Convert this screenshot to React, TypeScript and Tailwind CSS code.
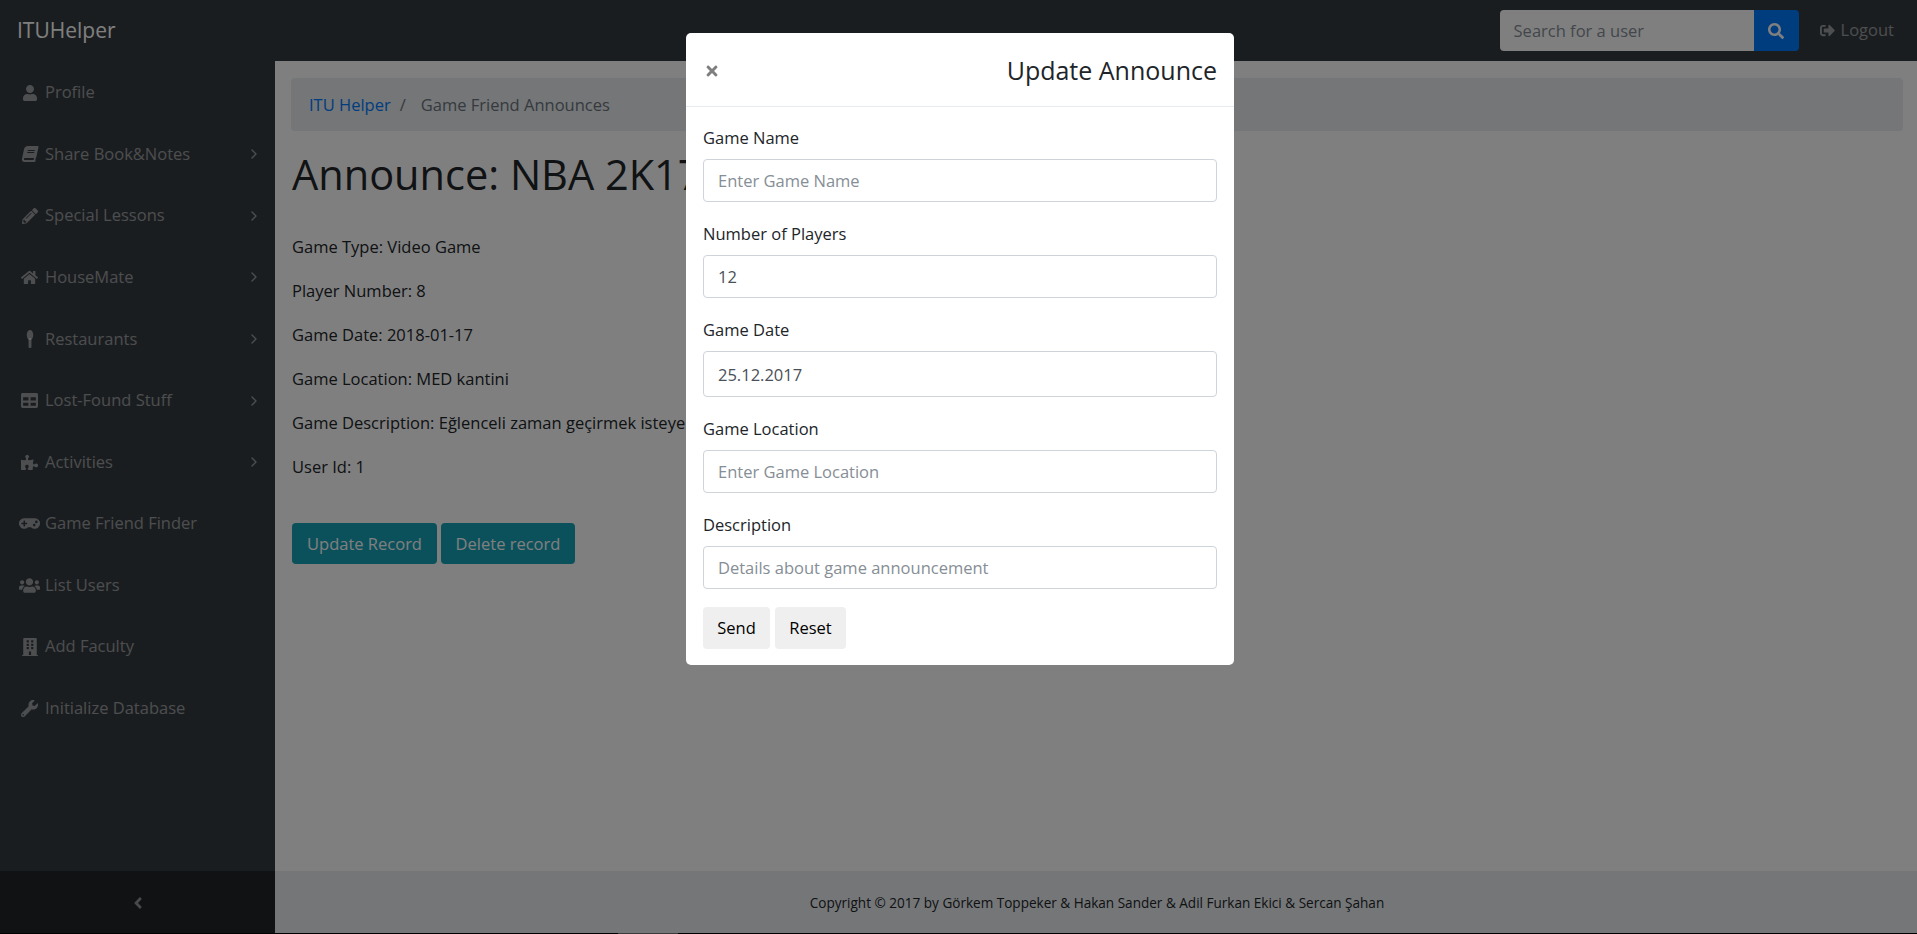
import type { ReactNode } from "react";
import {
  FaUser,
  FaBook,
  FaPencilAlt,
  FaHome,
  FaTable,
  FaPuzzlePiece,
  FaGamepad,
  FaUsers,
  FaBuilding,
  FaWrench,
  FaAngleLeft,
  FaSearch,
  FaSignOutAlt,
  FaTimes,
} from "react-icons/fa";
import { ChevronRight } from "lucide-react";

function SpoonIcon() {
  return (
    <svg viewBox="0 0 16 20" className="h-[18px] w-[16px]" fill="currentColor">
      <ellipse cx="8" cy="5.5" rx="3.6" ry="5.5" />
      <rect x="6.4" y="9" width="3.2" height="11" rx="1.2" />
    </svg>
  );
}

const navItems: { label: string; icon: ReactNode; arrow?: boolean }[] = [
  { label: "Profile", icon: <FaUser className="text-[16px]" /> },
  { label: "Share Book&Notes", icon: <FaBook className="text-[16px] -skew-x-12" />, arrow: true },
  { label: "Special Lessons", icon: <FaPencilAlt className="text-[16px]" />, arrow: true },
  { label: "HouseMate", icon: <FaHome className="text-[17px]" />, arrow: true },
  { label: "Restaurants", icon: <SpoonIcon />, arrow: true },
  { label: "Lost-Found Stuff", icon: <FaTable className="text-[17px]" />, arrow: true },
  { label: "Activities", icon: <FaPuzzlePiece className="text-[17px]" />, arrow: true },
  { label: "Game Friend Finder", icon: <FaGamepad className="text-[21px]" /> },
  { label: "List Users", icon: <FaUsers className="text-[21px]" /> },
  { label: "Add Faculty", icon: <FaBuilding className="text-[18px]" /> },
  { label: "Initialize Database", icon: <FaWrench className="text-[17px]" /> },
];

const details = [
  "Game Type: Video Game",
  "Player Number: 8",
  "Game Date: 2018-01-17",
  "Game Location: MED kantini",
  "Game Description: Eğlenceli zaman geçirmek isteyenler gelsin",
  "User Id: 1",
];

function Field({
  label,
  placeholder,
  value,
  tall,
}: {
  label: string;
  placeholder?: string;
  value?: string;
  tall?: boolean;
}) {
  return (
    <div className="mb-[18.6px]">
      <label className="mb-2 block text-[16.5px] leading-[26.4px] text-[#212529]">{label}</label>
      <input
        readOnly
        placeholder={placeholder}
        value={value ?? ""}
        className={`block w-full rounded border border-[#ced4da] bg-white px-[14px] text-[16.5px] text-[#495057] outline-none placeholder:text-[#868e96] ${
          tall ? "h-[46px]" : "h-[43px]"
        }`}
      />
    </div>
  );
}

export default function App() {
  return (
    <div className="flex h-[934px] flex-col overflow-hidden bg-white font-['Open_Sans',sans-serif]">
      {/* Navbar */}
      <header className="flex h-[61px] shrink-0 items-center bg-[#343a40] pl-[17px] pr-[23px]">
        <a className="text-[21px] text-white">ITUHelper</a>
        <div className="ml-auto flex items-center">
          <div className="flex h-[41px] w-[299px]">
            <input
              readOnly
              placeholder="Search for a user"
              className="h-full w-[254px] rounded-l bg-white px-[14px] text-[16.5px] outline-none placeholder:text-[#868e96]"
            />
            <button className="flex h-full w-[45px] items-center justify-center rounded-r bg-[#007bff] text-white">
              <FaSearch className="text-[16px]" />
            </button>
          </div>
          <a className="ml-[21px] flex items-center gap-[6px] text-[16.5px] text-white/50">
            <FaSignOutAlt className="text-[15px]" />
            Logout
          </a>
        </div>
      </header>

      <div className="flex min-h-0 flex-1">
        {/* Sidebar */}
        <aside className="flex w-[275px] shrink-0 flex-col bg-[#343a40]">
          <nav className="flex-1 pt-px">
            {navItems.map((item) => (
              <a key={item.label} className="flex h-[61.55px] items-center pl-[18px] pr-[13px] text-[16.5px] text-white/50">
                <span className="flex w-[27px] justify-center pr-[4px]">{item.icon}</span>
                <span>{item.label}</span>
                {item.arrow && <ChevronRight size={16} strokeWidth={2} className="ml-auto" />}
              </a>
            ))}
          </nav>
          <div className="flex h-[62px] items-center justify-center bg-[#212529] pt-px text-white/50">
            <FaAngleLeft className="text-[18px]" />
          </div>
        </aside>

        {/* Content */}
        <main className="flex min-w-0 flex-1 flex-col">
          <div className="flex-1 pl-4 pr-[14px] pt-[17px] text-[#212529]">
            <div className="flex h-[53px] items-center rounded bg-[#e9ecef] pl-[18px] pt-px text-[16.5px]">
              <a className="text-[#007bff]">ITU Helper</a>
              <span className="px-[9px] text-[#6c757d]">/</span>
              <span className="pl-[6px] text-[#6c757d]">Game Friend Announces</span>
            </div>
            <h1 className="mt-[17px] pl-px text-[41.5px] leading-[53px]">Announce: NBA 2K17</h1>
            <div className="mt-[33px] pl-px">
              {details.map((line) => (
                <p key={line} className="mb-[17.6px] text-[16.5px] leading-[26.4px]">
                  {line}
                </p>
              ))}
            </div>
            <div className="mt-[43px] flex gap-[4px] pl-px">
              <button className="h-[41px] w-[145px] rounded bg-[#17a2b8] text-[16.5px] text-white">Update Record</button>
              <button className="h-[41px] w-[134px] rounded bg-[#17a2b8] text-[16.5px] text-white">Delete record</button>
            </div>
          </div>
          <footer className="flex h-[62px] items-center justify-center bg-[#e9ecef] pl-[2px] pt-[3px] text-[13.55px] text-[#212529]">
            Copyright © 2017 by Görkem Toppeker &amp; Hakan Sander &amp; Adil Furkan Ekici &amp; Sercan Şahan
          </footer>
        </main>
      </div>

      {/* Bottom edge */}
      <div className="flex h-px shrink-0 bg-black">
        <div className="ml-[618px] w-[60px] bg-[#777]" />
      </div>

      {/* Modal */}
      <div className="fixed inset-0 flex justify-center bg-black/50 pl-[3px] pt-[33px]">
        <div className="h-[632px] w-[548px] rounded-[5px] bg-white">
          <div className="flex h-[74px] items-center justify-between border-b border-[#e9ecef] pl-[18px] pr-[17px]">
            <FaTimes className="mt-[2px] text-[16px] text-[#7f7f7f]" />
            <h5 className="mt-[2px] text-[25px] text-[#212529]">Update Announce</h5>
          </div>
          <div className="px-[17px] pt-[18px]">
            <Field label="Game Name" placeholder="Enter Game Name" />
            <Field label="Number of Players" value="12" />
            <Field label="Game Date" value="25.12.2017" tall />
            <Field label="Game Location" placeholder="Enter Game Location" />
            <Field label="Description" placeholder="Details about game announcement" />
            <div className="-mt-px flex gap-[5px]">
              <button className="h-[42px] w-[67px] rounded bg-[#efefef] text-[16.5px] text-black">Send</button>
              <button className="h-[42px] w-[71px] rounded bg-[#efefef] text-[16.5px] text-black">Reset</button>
            </div>
          </div>
        </div>
      </div>
    </div>
  );
}
